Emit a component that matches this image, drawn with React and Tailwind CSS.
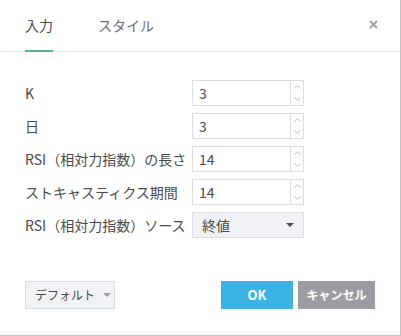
const font = { fontFamily: '"Noto Sans CJK JP", "Liberation Sans", sans-serif' };

function Spinner() {
    return (
        <div className="flex flex-col w-[13px] border-l border-[#dcdfe3]">
            <div className="flex-1 flex items-center justify-center">
                <svg width="7" height="4" viewBox="0 0 7 4">
                    <path d="M0.5 3.5 L3.5 0.7 L6.5 3.5" fill="none" stroke="#b9bcc2" strokeWidth="1" />
                </svg>
            </div>
            <div className="flex-1 flex items-center justify-center">
                <svg width="7" height="4" viewBox="0 0 7 4">
                    <path d="M0.5 0.5 L3.5 3.3 L6.5 0.5" fill="none" stroke="#b9bcc2" strokeWidth="1" />
                </svg>
            </div>
        </div>
    );
}

function NumberInput({ value }) {
    return (
        <div className="flex h-[26px] w-[112px] border border-[#d9dce0] bg-white">
            <div className="flex-1 flex items-center pl-[6px] text-[14px] text-[#4a4a4a]">{value}</div>
            <Spinner />
        </div>
    );
}

function Caret({ color = '#555' }) {
    return (
        <svg width="8" height="4" viewBox="0 0 8 4">
            <path d="M0 0 L8 0 L4 4 Z" fill={color} />
        </svg>
    );
}

export default function App() {
    const rows = [
        ['K', '3'],
        ['日', '3'],
        ['RSI（相対力指数）の長さ', '14'],
        ['ストキャスティクス期間', '14'],
    ];

    return (
        <div style={font} className="w-[401px] h-[336px] bg-white border-r border-b border-[#c4c4c4] flex flex-col">
            {/* Header - tabs */}
            <div className="h-[52px] border-b border-[#e0e3e8] flex items-center justify-between pl-[25px] pr-[22px]">
                <div className="flex h-full gap-[45px]">
                    <div className="relative flex items-center text-[14px] text-[#4a4a4a]">
                        入力
                        <div className="absolute left-0 right-0 bottom-[-1px] h-[2px] bg-[#53b987]" />
                    </div>
                    <div className="flex items-center text-[14px] text-[#6f6f6f]">スタイル</div>
                </div>
                <svg width="9" height="9" viewBox="0 0 9 9" className="mb-[2px]">
                    <path d="M1 1 L8 8 M8 1 L1 8" stroke="#9ea2a9" strokeWidth="2" />
                </svg>
            </div>

            {/* Body */}
            <div className="pt-[28px] pl-[25px] flex flex-col gap-[7px]">
                {rows.map(([label, value]) => (
                    <div key={label} className="grid grid-cols-[167px_112px] items-center">
                        <span className="text-[14px] text-[#4a4a4a] whitespace-nowrap">{label}</span>
                        <NumberInput value={value} />
                    </div>
                ))}
                <div className="grid grid-cols-[167px_112px] items-center">
                    <span className="text-[14px] text-[#4a4a4a] whitespace-nowrap">RSI（相対力指数）ソース</span>
                    <div className="flex items-center justify-between h-[26px] w-[112px] border border-[#dcdee3] bg-[#f1f2f6] pl-[9px] pr-[9px]">
                        <span className="text-[14px] text-[#4a4a4a]">終値</span>
                        <Caret color="#4a4a4a" />
                    </div>
                </div>
            </div>

            {/* Footer */}
            <div className="mt-[43px] flex items-center justify-between pl-[25px] pr-[25px]">
                <div className="flex items-center gap-[8px] h-[28px] w-[90px] border border-[#d9dce0] bg-[#f1f2f6] pl-[9px] whitespace-nowrap">
                    <span className="text-[12px] text-[#4a4a4a]">デフォルト</span>
                    <Caret color="#9a9ea5" />
                </div>
                <div className="flex gap-[5px]">
                    <div className="flex items-center justify-center h-[28px] w-[72px] bg-[#3bb3e4] text-white text-[13px] font-bold">OK</div>
                    <div className="flex items-center justify-center h-[28px] w-[77px] bg-[#9b9da3] text-white text-[12px] font-bold whitespace-nowrap">キャンセル</div>
                </div>
            </div>
        </div>
    );
}
